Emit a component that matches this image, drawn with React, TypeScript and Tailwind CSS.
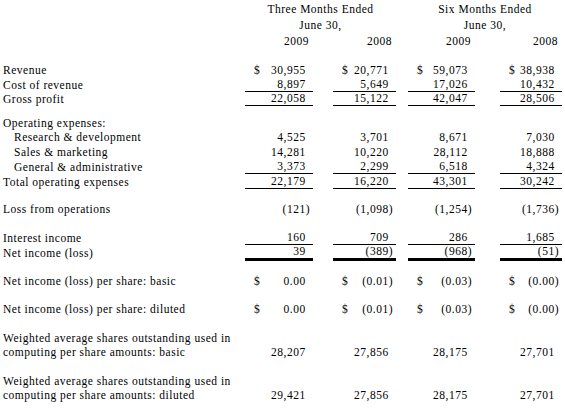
import React from "react";

type Cell = { v: string; d?: boolean };
type Line = "none" | "thin" | "thick";

const GRID = "grid grid-cols-[245px_68px_20px_63px_12px_67px_25px_62px]";

function Num({ c, line }: { c: Cell; line: Line }) {
  const neg = c.v.startsWith("(");
  const b =
    line === "thin"
      ? "border-b border-black"
      : line === "thick"
      ? "border-b-[3px] border-black"
      : "";
  return (
    <div className={`flex justify-between items-center pl-[9px] pr-[3px] ${b}`}>
      <span>{c.d ? "$" : ""}</span>
      <span className="whitespace-nowrap">
        {c.v}
        {!neg && <span className="invisible">)</span>}
      </span>
    </div>
  );
}

function Row({
  label,
  indent,
  cells,
  line = "none",
  h = "h-[14px]",
}: {
  label?: string;
  indent?: boolean;
  cells?: Cell[];
  line?: Line;
  h?: string;
}) {
  return (
    <div className={`${GRID} ${h}`}>
      <div className={`whitespace-nowrap flex items-center ${indent ? "pl-[14px]" : "pl-[3px]"}`}>
        {label ?? ""}
      </div>
      {cells ? (
        <>
          <Num c={cells[0]} line={line} />
          <div />
          <Num c={cells[1]} line={line} />
          <div />
          <Num c={cells[2]} line={line} />
          <div />
          <Num c={cells[3]} line={line} />
        </>
      ) : null}
    </div>
  );
}

const Blank = ({ h = "h-[14px]" }: { h?: string }) => <div className={h} />;

const c = (a: string, b: string, x: string, y: string, d = false): Cell[] => [
  { v: a, d },
  { v: b, d },
  { v: x, d },
  { v: y, d },
];

export default function App() {
  return (
    <div className="w-[565px] h-[418px] bg-white text-black font-['Liberation_Serif',serif] text-[11.5px] leading-[14px] tracking-[0.5px] overflow-hidden">
      <div className="pt-[1px]">
        <div className={`${GRID} h-[16px] items-center`}>
          <div />
          <div className="col-span-3 text-center">Three Months Ended</div>
          <div />
          <div className="col-span-3 text-center">Six Months Ended</div>
        </div>
        <div className={`${GRID} h-[16px] items-center`}>
          <div />
          <div className="col-span-3 text-center">June 30,</div>
          <div />
          <div className="col-span-3 text-center">June 30,</div>
        </div>
        <div className={`${GRID} h-[16px] items-center`}>
          <div />
          <div className="text-right pr-[4px]">2009</div>
          <div />
          <div className="text-right pr-[4px]">2008</div>
          <div />
          <div className="text-right pr-[4px]">2009</div>
          <div />
          <div className="text-right pr-[4px]">2008</div>
        </div>
        <div className="h-[14px]" />

        <Row label="Revenue" cells={c("30,955", "20,771", "59,073", "38,938", true)} />
        <Row label="Cost of revenue" cells={c("8,897", "5,649", "17,026", "10,432")} line="thin" />
        <Row label="Gross profit" cells={c("22,058", "15,122", "42,047", "28,506")} line="thin" />
        <Blank h="h-[11px]" />
        <Row label="Operating expenses:" />
        <Row label="Research & development" indent cells={c("4,525", "3,701", "8,671", "7,030")} />
        <Row label="Sales & marketing" indent h="h-[15px]" cells={c("14,281", "10,220", "28,112", "18,888")} />
        <Row label="General & administrative" indent h="h-[15px]" cells={c("3,373", "2,299", "6,518", "4,324")} line="thin" />
        <Row label="Total operating expenses" cells={c("22,179", "16,220", "43,301", "30,242")} line="thin" />
        <Blank />
        <Row label="Loss from operations" cells={c("(121)", "(1,098)", "(1,254)", "(1,736)")} />
        <Blank />
        <Row label="Interest income" cells={c("160", "709", "286", "1,685")} line="thin" />
        <Row label="Net income (loss)" cells={c("39", "(389)", "(968)", "(51)")} line="thick" />
        <Blank h="h-[16px]" />
        <Row label="Net income (loss) per share: basic" cells={c("0.00", "(0.01)", "(0.03)", "(0.00)", true)} />
        <Blank />
        <Row label="Net income (loss) per share: diluted" cells={c("0.00", "(0.01)", "(0.03)", "(0.00)", true)} />
        <Blank h="h-[15px]" />
        <Row label="Weighted average shares outstanding used in" />
        <Row label="computing per share amounts: basic" cells={c("28,207", "27,856", "28,175", "27,701")} />
        <Blank h="h-[15px]" />
        <Row label="Weighted average shares outstanding used in" />
        <Row label="computing per share amounts: diluted" cells={c("29,421", "27,856", "28,175", "27,701")} />
      </div>
    </div>
  );
}
